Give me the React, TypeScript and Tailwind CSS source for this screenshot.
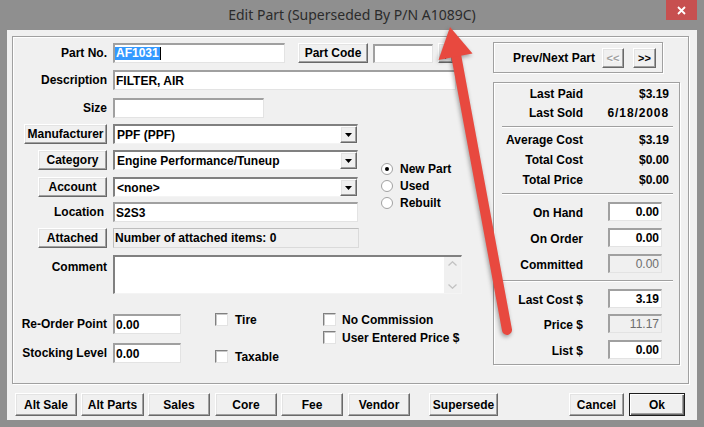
import React from "react";

const raised =
  "bg-[#f0f0f0] border border-t-white border-l-white border-r-[#696969] border-b-[#696969] shadow-[inset_-1px_-1px_0_#a0a0a0,inset_1px_1px_0_#e3e3e3]";
const sunkLight =
  "bg-white border-t-2 border-l-2 border-b border-r border-t-[#a0a0a0] border-l-[#a0a0a0] border-b-[#e3e3e3] border-r-[#e3e3e3]";
const sunkDark =
  "bg-white border-t-2 border-l-2 border-b border-r border-t-[#808080] border-l-[#808080] border-b-[#f4f4f4] border-r-[#f4f4f4]";

function Btn({ className = "", children, disabled = false }: { className?: string; children?: React.ReactNode; disabled?: boolean }) {
  return (
    <div className={`${raised} flex items-center justify-center ${disabled ? "text-[#a0a0a0] [text-shadow:1px_1px_0_#fff]" : ""} ${className}`}>
      {children}
    </div>
  );
}

function Tri() {
  return (
    <svg width="7" height="4" viewBox="0 0 7 4">
      <polygon points="0,0 7,0 3.5,4" fill="#000" />
    </svg>
  );
}

function Select({ className, text }: { className: string; text: string }) {
  return (
    <div className={`${sunkDark} ${className} h-[20px] flex items-center`}>
      <span className="pl-[2px] flex-1 whitespace-nowrap overflow-hidden">{text}</span>
      <Btn className="w-[17px] h-full">
        <Tri />
      </Btn>
    </div>
  );
}

function Label({ children }: { children: React.ReactNode }) {
  return <div className="w-[94px] flex justify-end items-center whitespace-nowrap">{children}</div>;
}

function Check({ label, gap }: { label: string; gap: string }) {
  return (
    <div className="flex items-center h-[13px]">
      <div className="w-[13px] h-[13px] bg-white border border-t-[#808080] border-l-[#808080] border-b-[#e3e3e3] border-r-[#e3e3e3] shadow-[inset_1px_1px_0_#c8c8c8]" />
      <span className={`${gap} whitespace-nowrap`}>{label}</span>
    </div>
  );
}

function Radio({ label, on }: { label: string; on?: boolean }) {
  return (
    <div className="flex items-center h-[17px]">
      <svg width="12" height="12" viewBox="0 0 12 12">
        <circle cx="6" cy="6" r="5.5" fill="#fff" stroke="#a0a0a0" strokeWidth="1" />
        {on && <circle cx="6" cy="6" r="2" fill="#000" />}
      </svg>
      <span className="ml-[7px] whitespace-nowrap">{label}</span>
    </div>
  );
}

function Stat({ label, value, h, track = "" }: { label: string; value: string; h: string; track?: string }) {
  return (
    <div className={`flex items-center ${h}`}>
      <div className="w-[89px] text-right whitespace-nowrap">{label}</div>
      <div className={`ml-auto mr-[10px] ${track}`}>{value}</div>
    </div>
  );
}

function NumRow({ label, value, disabled, mt }: { label: string; value: string; disabled?: boolean; mt: string }) {
  return (
    <div className={`flex items-center h-[19px] ${mt}`}>
      <div className="w-[89px] text-right whitespace-nowrap pt-[3px]">{label}</div>
      <div
        className={`ml-auto mr-[17px] w-[54px] h-[19px] flex items-center justify-end pr-[2px] border-t-2 border-l-2 border-b border-r border-t-[#a0a0a0] border-l-[#a0a0a0] border-b-[#e3e3e3] border-r-[#e3e3e3] ${
          disabled ? "bg-[#f0f0f0] text-[#6d6d6d] font-normal" : "bg-white"
        }`}
      >
        {value}
      </div>
    </div>
  );
}

function Sep({ mt }: { mt: string }) {
  return <div className={`${mt} ml-[8px] mr-[6px] h-[2px] border-t border-t-[#a0a0a0] border-b border-b-white`} />;
}

export default function App() {
  return (
    <div className="w-[704px] h-[427px] bg-[#8f8f8f] flex flex-col relative overflow-hidden font-['Liberation_Sans',Arial,sans-serif] text-[12px] leading-[14px] font-bold text-black">
      {/* Title bar */}
      <div className="h-[30px] grid grid-cols-[1fr_auto_1fr] shrink-0">
        <div />
        <div className="self-center font-['Noto_Sans',sans-serif] font-normal text-[14px] text-[#2b2b2b] leading-none pb-[1px]">
          Edit Part (Superseded By P/N A1089C)
        </div>
        <div className="flex justify-end items-start pr-[7px]">
          <div className="w-[31px] h-[20px] bg-[#c75050] flex items-center justify-center">
            <svg width="9" height="9" viewBox="0 0 9 9">
              <path d="M1 1 L8 8 M8 1 L1 8" stroke="#fff" strokeWidth="1.8" />
            </svg>
          </div>
        </div>
      </div>

      {/* Client area */}
      <div className="mx-[7px] h-[390px] bg-[#f0f0f0] flex flex-col">
        <div className="ml-[5px] mt-[6px] w-[677px] h-[348px] border border-[#a0a0a0] shadow-[inset_1px_1px_0_#fff,1px_1px_0_#fff] flex">
          {/* Left column */}
          <div className="w-[480px] flex flex-col pt-[6px]">
            <div className="flex items-center h-[20px]">
              <Label>Part No.</Label>
              <div className={`${sunkLight} ml-[6px] w-[172px] h-[20px] flex items-center`}>
                <span className="bg-[#3399ff] text-white leading-[13px] px-[1px]">AF1031</span>
                <span className="w-[1px] h-[13px] bg-black" />
              </div>
              <Btn className="ml-[13px] w-[70px] h-[20px]">Part Code</Btn>
              <div className={`${sunkLight} ml-[5px] w-[60px] h-[19px]`} />
              <Btn className="ml-[5px] w-[15px] h-[20px] items-end pb-[3px]">
                <Tri />
              </Btn>
            </div>
            <div className="flex items-center h-[20px] mt-[7px]">
              <Label>Description</Label>
              <div className={`${sunkLight} ml-[6px] w-[343px] h-[20px] flex items-center pl-[1px]`}>FILTER, AIR</div>
            </div>
            <div className="flex items-center h-[20px] mt-[8px]">
              <Label>Size</Label>
              <div className={`${sunkLight} ml-[6px] w-[151px] h-[20px]`} />
            </div>

            <div className="flex mt-[6px]">
              <div className="flex flex-col">
                <div className="flex items-center h-[20px]">
                  <Label>
                    <Btn className="w-[83px] h-[20px]">Manufacturer</Btn>
                  </Label>
                  <Select className="ml-[6px] w-[245px]" text="PPF (PPF)" />
                </div>
                <div className="flex items-center h-[20px] mt-[6px]">
                  <Label>
                    <Btn className="w-[69px] h-[20px]">Category</Btn>
                  </Label>
                  <Select className="ml-[6px] w-[245px]" text="Engine Performance/Tuneup" />
                </div>
                <div className="flex items-center h-[20px] mt-[7px]">
                  <Label>
                    <Btn className="w-[69px] h-[20px]">Account</Btn>
                  </Label>
                  <Select className="ml-[6px] w-[245px]" text="<none>" />
                </div>
                <div className="flex items-center h-[20px] mt-[5px]">
                  <Label>
                    <span className="pr-[3px]">Location</span>
                  </Label>
                  <div className={`${sunkLight} ml-[6px] w-[245px] h-[20px] flex items-center pl-[1px]`}>S2S3</div>
                </div>
                <div className="flex items-center h-[20px] mt-[6px]">
                  <Label>
                    <Btn className="w-[69px] h-[20px]">Attached</Btn>
                  </Label>
                  <div className="ml-[6px] w-[246px] h-[20px] flex items-center pl-[1px] bg-[#f0f0f0] border border-[#dadada] border-t-[#bdbdbd] border-l-[#bdbdbd]">
                    Number of attached items: 0
                  </div>
                </div>
              </div>
              <div className="ml-[22px] mt-[36px] flex flex-col">
                <Radio label="New Part" on />
                <Radio label="Used" />
                <Radio label="Rebuilt" />
              </div>
            </div>

            <div className="flex items-start mt-[7px]">
              <div className="w-[94px] h-[20px] mt-[2px] flex justify-end items-center">Comment</div>
              <div className={`${sunkDark} ml-[6px] w-[349px] h-[39px] flex`}>
                <div className="flex-1" />
                <div className="w-[17px] h-full bg-[#f0f0f0] flex flex-col justify-between items-center py-[4px]">
                  <svg width="9" height="5" viewBox="0 0 9 5">
                    <polyline points="0.5,4.5 4.5,0.8 8.5,4.5" fill="none" stroke="#c2c2c2" strokeWidth="1.3" />
                  </svg>
                  <svg width="9" height="5" viewBox="0 0 9 5">
                    <polyline points="0.5,0.5 4.5,4.2 8.5,0.5" fill="none" stroke="#c2c2c2" strokeWidth="1.3" />
                  </svg>
                </div>
              </div>
            </div>

            <div className="flex mt-[19px]">
              <div className="flex flex-col">
                <div className="flex items-center h-[20px] mt-[1px]">
                  <Label>Re-Order Point</Label>
                  <div className={`${sunkLight} ml-[6px] w-[68px] h-[20px] flex items-center pl-[1px]`}>0.00</div>
                </div>
                <div className="flex items-center h-[20px] mt-[9px]">
                  <Label>Stocking Level</Label>
                  <div className={`${sunkLight} ml-[6px] w-[68px] h-[20px] flex items-center pl-[1px]`}>0.00</div>
                </div>
              </div>
              <div className="ml-[34px] w-[108px] flex flex-col">
                <Check label="Tire" gap="ml-[7px]" />
                <div className="mt-[24px]">
                  <Check label="Taxable" gap="ml-[7px]" />
                </div>
              </div>
              <div className="flex flex-col">
                <Check label="No Commission" gap="ml-[6px]" />
                <div className="mt-[5px]">
                  <Check label="User Entered Price $" gap="ml-[6px]" />
                </div>
              </div>
            </div>
          </div>

          {/* Right column */}
          <div className="flex flex-col pt-[5px]">
            <div className="w-[170px] h-[31px] border border-[#a0a0a0] shadow-[inset_1px_1px_0_#fff,1px_1px_0_#fff] flex items-center justify-end pr-[6px]">
              <span>Prev/Next Part</span>
              <Btn className="ml-[7px] w-[22px] h-[20px] text-[11px]" disabled>
                &lt;&lt;
              </Btn>
              <Btn className="ml-[9px] w-[23px] h-[20px] text-[11px]">&gt;&gt;</Btn>
            </div>
            <div className="mt-[9px] w-[187px] h-[283px] border border-[#a0a0a0] shadow-[inset_1px_1px_0_#fff,1px_1px_0_#fff] flex flex-col">
              <div className="mt-[1px]" />
              <Stat label="Last Paid" value="$3.19" h="h-[19px]" />
              <Stat label="Last Sold" value="6/18/2008" h="h-[19px]" track="tracking-[0.9px]" />
              <Sep mt="mt-[4px]" />
              <div className="mt-[2px]" />
              <Stat label="Average Cost" value="$3.19" h="h-[20px]" />
              <Stat label="Total Cost" value="$0.00" h="h-[20px]" />
              <Stat label="Total Price" value="$0.00" h="h-[19px]" />
              <Sep mt="mt-[4px]" />
              <NumRow label="On Hand" value="0.00" mt="mt-[7px]" />
              <NumRow label="On Order" value="0.00" mt="mt-[7px]" />
              <NumRow label="Committed" value="0.00" disabled mt="mt-[7px]" />
              <Sep mt="mt-[7px]" />
              <NumRow label="Last Cost $" value="3.19" mt="mt-[7px]" />
              <NumRow label="Price $" value="11.17" disabled mt="mt-[6px]" />
              <NumRow label="List $" value="0.00" mt="mt-[7px]" />
            </div>
          </div>
        </div>

        {/* Bottom buttons */}
        <div className="flex mt-[9px] ml-[8px] h-[23px]">
          <Btn className="w-[62px] h-[23px]">Alt Sale</Btn>
          <Btn className="ml-[4px] w-[63px] h-[23px]">Alt Parts</Btn>
          <Btn className="ml-[4px] w-[62px] h-[23px]">Sales</Btn>
          <Btn className="ml-[5px] w-[62px] h-[23px]">Core</Btn>
          <Btn className="ml-[4px] w-[62px] h-[23px]">Fee</Btn>
          <Btn className="ml-[5px] w-[62px] h-[23px]">Vendor</Btn>
          <Btn className="ml-[19px] w-[69px] h-[23px]">Supersede</Btn>
          <Btn className="ml-[71px] w-[55px] h-[23px]">Cancel</Btn>
          <div className="ml-[5px] w-[56px] h-[23px] bg-[#f0f0f0] border border-[#1e1e1e] shadow-[inset_1px_1px_0_#fff,inset_-1px_-1px_0_#696969,inset_-2px_-2px_0_#a0a0a0] flex items-center justify-center">
            Ok
          </div>
        </div>
      </div>

      {/* Annotation arrow overlay */}
      <svg
        className="absolute left-0 top-0 pointer-events-none [filter:drop-shadow(-1px_2px_2px_rgba(0,0,0,0.35))]"
        width="704"
        height="427"
        viewBox="0 0 704 427"
      >
        <line x1="455.5" y1="52" x2="507" y2="330" stroke="#e8493f" strokeWidth="10" strokeLinecap="round" />
        <polygon points="450,27 472.5,53.5 438.5,60" fill="#e8493f" />
      </svg>
    </div>
  );
}
